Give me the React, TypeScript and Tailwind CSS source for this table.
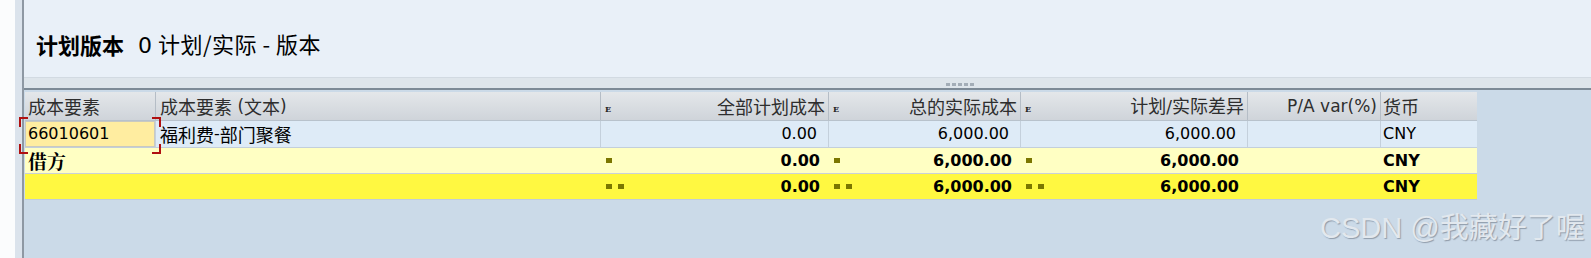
import React from "react";

const latin = "font-['DejaVu_Sans','Noto_Sans_CJK_SC',sans-serif]";

function C({ children, className = "" }: { children: React.ReactNode; className?: string }) {
  return <span className={`font-['Noto_Sans_CJK_SC',sans-serif] text-[18px] ${className}`}>{children}</span>;
}

function Sq() {
  return <span className="inline-block w-[6px] h-[5px] bg-[#7b7600]" />;
}

function SumIcon() {
  return (
    <span className="mt-[5px] text-[8px] leading-none font-bold font-['DejaVu_Serif',serif] text-[#222]">
      E
    </span>
  );
}

export default function App() {
  return (
    <div className="w-[1591px] h-[258px] flex overflow-hidden relative">
      <div className="w-[15px] h-full bg-[#fbfcfd]" />
      <div className="w-[7px] h-full bg-[#dbe3ec]" />
      <div className="w-[2px] h-full bg-[#8e98a3]" />
      <div className="flex-1 flex flex-col">
        {/* top panel */}
        <div className="h-[77px] bg-[#e9f0f8] pt-[32px] pl-[12px]">
          <div className="flex items-center gap-[14px] h-[24px] font-['Noto_Sans_CJK_SC',sans-serif] text-[22px] text-black leading-[24px]">
            <span className="font-bold">计划版本</span>
            <span className="tracking-[0.5px]">
              <span className={latin}>0</span> 计划/实际 - 版本
            </span>
          </div>
        </div>
        <div className="h-px bg-[#d2dae2]" />
        <div className="h-[10px] bg-[#dee5eb] pl-[922px] pt-[5px]">
          <div className="flex gap-[2px]">
            <span className="w-[4px] h-[3px] bg-[#a3adb7]" />
            <span className="w-[4px] h-[3px] bg-[#a3adb7]" />
            <span className="w-[4px] h-[3px] bg-[#a3adb7]" />
            <span className="w-[4px] h-[3px] bg-[#a3adb7]" />
            <span className="w-[4px] h-[3px] bg-[#a3adb7]" />
          </div>
        </div>
        <div className="h-[2px] bg-[#7d8a96]" />
        {/* table area */}
        <div className="flex-1 bg-[#cbdae8] pt-[2px] pl-[1px]">
          <div className={`w-[1452px] ${latin} relative`}>
            {/* header */}
            <div className="flex h-[29px] bg-gradient-to-b from-[#e4e7ea] to-[#cfd4da] border-b border-[#b8c2cc] text-[17px] text-[#2e2e2e] leading-none">
              <div className="w-[131px] border-r border-[#b5bdc6] flex items-center pl-[3px]"><C>成本要素</C></div>
              <div className="w-[445px] border-r border-[#b5bdc6] flex items-center pl-[4px]">
                <C>成本要素</C>&nbsp;(<C>文本</C>)
              </div>
              <div className="w-[228px] border-r border-[#b5bdc6] flex items-center justify-between pl-[4px] pr-[3px]">
                <SumIcon />
                <C>全部计划成本</C>
              </div>
              <div className="w-[192px] border-r border-[#b5bdc6] flex items-center justify-between pl-[4px] pr-[3px]">
                <SumIcon />
                <C>总的实际成本</C>
              </div>
              <div className="w-[227px] border-r border-[#b5bdc6] flex items-center justify-between pl-[4px] pr-[3px]">
                <SumIcon />
                <span><C>计划</C>/<C>实际差异</C></span>
              </div>
              <div className="w-[133px] border-r border-[#b5bdc6] flex items-center justify-end pr-[3px]">P/A var(%)</div>
              <div className="w-[96px] flex items-center pl-[2px]"><C>货币</C></div>
            </div>
            {/* row 1 */}
            <div className="flex h-[27px] bg-[#deebf7] border-b border-[#c3cfdb] text-[16px] text-black leading-none">
              <div className="w-[131px] border-r border-[#c4d0dc] flex">
                <div className="flex-1 border border-[#c9c9c0] bg-[#ffeda0] flex items-center pl-[2px]">66010601</div>
              </div>
              <div className="w-[445px] border-r border-[#c4d0dc] flex items-center pl-[4px]">
                <C>福利费</C>-<C>部门聚餐</C>
              </div>
              <div className="w-[228px] border-r border-[#c4d0dc] flex items-center justify-end pr-[11px]">0.00</div>
              <div className="w-[192px] border-r border-[#c4d0dc] flex items-center justify-end pr-[11px]">6,000.00</div>
              <div className="w-[227px] border-r border-[#c4d0dc] flex items-center justify-end pr-[11px]">6,000.00</div>
              <div className="w-[133px] border-r border-[#c4d0dc]" />
              <div className="w-[96px] flex items-center pl-[2px]">CNY</div>
            </div>
            {/* row 2 */}
            <div className="flex h-[26px] bg-[#ffffc3] border-b border-[#c9d1d9] text-[16px] font-bold text-black leading-none">
              <div className="w-[131px] flex items-center pl-[3px]">
                <span className="font-['Noto_Serif_CJK_SC','Noto_Sans_CJK_SC',serif] text-[19px]">借方</span>
              </div>
              <div className="w-[445px]" />
              <div className="w-[228px] flex items-center justify-between pl-[5px] pr-[9px]">
                <span className="flex gap-[6px]"><Sq /></span>
                <span>0.00</span>
              </div>
              <div className="w-[192px] flex items-center justify-between pl-[5px] pr-[9px]">
                <span className="flex gap-[6px]"><Sq /></span>
                <span>6,000.00</span>
              </div>
              <div className="w-[227px] flex items-center justify-between pl-[5px] pr-[9px]">
                <span className="flex gap-[6px]"><Sq /></span>
                <span>6,000.00</span>
              </div>
              <div className="w-[133px]" />
              <div className="w-[96px] flex items-center pl-[2px]">CNY</div>
            </div>
            {/* row 3 */}
            <div className="flex h-[26px] bg-[#fff841] border-b border-[#c0cdd9] text-[16px] font-bold text-black leading-none">
              <div className="w-[131px]" />
              <div className="w-[445px]" />
              <div className="w-[228px] flex items-center justify-between pl-[5px] pr-[9px]">
                <span className="flex gap-[6px]"><Sq /><Sq /></span>
                <span>0.00</span>
              </div>
              <div className="w-[192px] flex items-center justify-between pl-[5px] pr-[9px]">
                <span className="flex gap-[6px]"><Sq /><Sq /></span>
                <span>6,000.00</span>
              </div>
              <div className="w-[227px] flex items-center justify-between pl-[5px] pr-[9px]">
                <span className="flex gap-[6px]"><Sq /><Sq /></span>
                <span>6,000.00</span>
              </div>
              <div className="w-[133px]" />
              <div className="w-[96px] flex items-center pl-[2px]">CNY</div>
            </div>
          </div>
        </div>
      </div>

      {/* focus brackets */}
      <div className="absolute left-[19px] top-[117px] w-[142px] h-[37px] pointer-events-none">
        <span className="absolute left-0 top-0 w-[9px] h-[2px] bg-[#b01010]" />
        <span className="absolute left-0 top-0 w-[2px] h-[10px] bg-[#b01010]" />
        <span className="absolute left-0 bottom-0 w-[9px] h-[2px] bg-[#b01010]" />
        <span className="absolute left-0 bottom-0 w-[2px] h-[10px] bg-[#b01010]" />
        <span className="absolute right-0 top-0 w-[9px] h-[2px] bg-[#b01010]" />
        <span className="absolute right-0 top-0 w-[2px] h-[10px] bg-[#b01010]" />
        <span className="absolute right-0 bottom-0 w-[9px] h-[2px] bg-[#b01010]" />
        <span className="absolute right-0 bottom-0 w-[2px] h-[10px] bg-[#b01010]" />
      </div>

      {/* watermark */}
      <div className="absolute left-[1320px] top-[210px] text-[29px] leading-[36px] whitespace-nowrap font-['Liberation_Sans','Noto_Sans_CJK_SC',sans-serif] text-[#e2e8ee] [text-shadow:1px_1px_1px_rgba(70,80,95,0.45)]">
        CSDN @我藏好了喔
      </div>
    </div>
  );
}
